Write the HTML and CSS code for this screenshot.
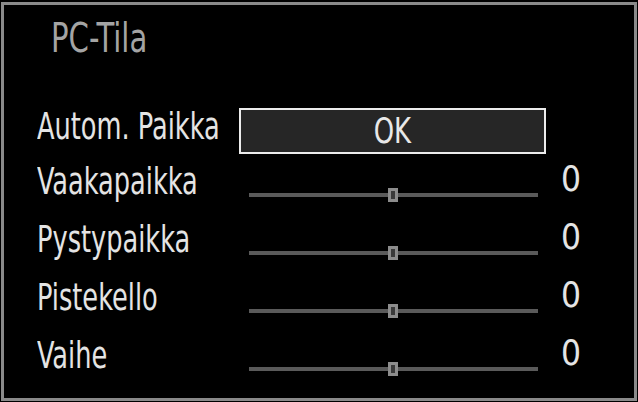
FILE: index.html
```html
<!DOCTYPE html>
<html lang="fi">
<head>
<meta charset="utf-8">
<title>PC-Tila</title>
<link rel="stylesheet" href="styles.css">
</head>
<body>
<div class="frame">
  <h1 class="title"><span class="narrow">PC-Tila</span></h1>
  <div class="menu">
    <div class="row row-button">
      <span class="label"><span class="narrow">Autom. Paikka</span></span>
      <div class="button"><span class="narrow ok">OK</span></div>
    </div>
    <div class="row">
      <span class="label"><span class="narrow">Vaakapaikka</span></span>
      <div class="slider"><span class="knob"></span></div>
      <span class="value">0</span>
    </div>
    <div class="row">
      <span class="label"><span class="narrow">Pystypaikka</span></span>
      <div class="slider"><span class="knob"></span></div>
      <span class="value">0</span>
    </div>
    <div class="row">
      <span class="label"><span class="narrow">Pistekello</span></span>
      <div class="slider"><span class="knob"></span></div>
      <span class="value">0</span>
    </div>
    <div class="row">
      <span class="label"><span class="narrow">Vaihe</span></span>
      <div class="slider"><span class="knob"></span></div>
      <span class="value">0</span>
    </div>
  </div>
</div>
</body>
</html>
```
FILE: styles.css
```css
html, body {
  margin: 0;
  padding: 0;
  background: #000;
}
body {
  width: 638px;
  height: 402px;
  overflow: hidden;
  font-family: "DejaVu Sans Condensed", "Liberation Sans", sans-serif;
}
.narrow {
  display: inline-block;
  transform: scaleX(0.75);
  transform-origin: left center;
  white-space: nowrap;
}
.frame {
  box-sizing: border-box;
  margin: 2px 0 0 1px;
  width: 636px;
  height: 399px;
  border: 3px solid #8a8a8a;
  background: #000;
}
.title {
  margin: 8px 0 0 47px;
  height: 50px;
  font-size: 41px;
  line-height: 50px;
  font-weight: normal;
  color: #a4a4a4;
}
.title .narrow {
  transform: scaleX(0.79);
}
.menu {
  margin-top: 45px;
  padding-left: 33px;
}
.row {
  display: grid;
  grid-template-columns: 202px 307px 50px;
  height: 58px;
}
.row-button {
  height: 46px;
}
.label {
  font-size: 38px;
  line-height: 54px;
  color: #e4e4e4;
  white-space: nowrap;
}
.row-button .label {
  line-height: 46px;
  margin-top: -5px;
}
.button {
  box-sizing: border-box;
  height: 46px;
  border: 2px solid #ececec;
  background: #262626;
  color: #e8e8e8;
  font-size: 36px;
  line-height: 42px;
  text-align: center;
}
.button .ok {
  transform: scaleX(0.8);
  transform-origin: center center;
}
.slider {
  position: relative;
  align-self: start;
  margin: 39px 8px 0 10px;
  height: 4px;
  background: #5a5a5a;
}
.knob {
  position: absolute;
  left: 139px;
  top: -5px;
  box-sizing: border-box;
  width: 10px;
  height: 14px;
  background: #3a3a3a;
  border: 3px solid #8c8c8c;
}
.value {
  margin-left: 15px;
  font-size: 35px;
  line-height: 50px;
  color: #e4e4e4;
}
```
